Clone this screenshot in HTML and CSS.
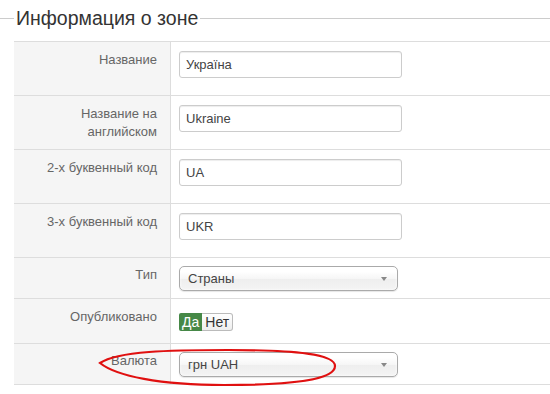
FILE: index.html
```html
<html>
  <head>
    <title>Информация о зоне</title>
    <link rel="stylesheet" href="styles.css">
  </head>

  <body>
    <fieldset class="zone">
      <legend>Информация о зоне</legend>
      <table class="admintable">
        <tr>
          <td class="key">Название</td>
          <td><input class="inputbox" type="text" value="Україна"></td>
        </tr>
        <tr>
          <td class="key">Название на<br>английском</td>
          <td><input class="inputbox" type="text" value="Ukraine"></td>
        </tr>
        <tr>
          <td class="key">2-х буквенный код</td>
          <td><input class="inputbox" type="text" value="UA"></td>
        </tr>
        <tr>
          <td class="key">3-х буквенный код</td>
          <td><input class="inputbox" type="text" value="UKR"></td>
        </tr>
        <tr class="row-sel">
          <td class="key">Тип</td>
          <td><div class="chzn"><span>Страны</span><b class="arrow"></b></div></td>
        </tr>
        <tr class="row-pub">
          <td class="key">Опубликовано</td>
          <td>
            <div class="toggle"><span class="yes">Да</span><span class="no">Нет</span></div>
          </td>
        </tr>
        <tr class="row-sel">
          <td class="key">Валюта</td>
          <td><div class="chzn"><span>грн UAH</span><b class="arrow"></b></div></td>
        </tr>
      </table>
    </fieldset>

    <svg class="scribble" width="550" height="394" viewBox="0 0 550 394">
      <path d="M100,363 C118,351 170,350 228,350 C296,350 335,354 335,366 C335,380 292,385 224,385 C160,385 116,376 100,363 Z" fill="none" stroke="#e01010" stroke-width="2.2"/>
    </svg>
  </body>
</html>
```

FILE: styles.css
```css
body {
  margin: 0;
  overflow: hidden;
  font-family: "Liberation Sans", Arial, sans-serif;
  font-size: 13px;
  color: #333;
  background: #fff;
}
.zone {
  margin: 6px 0 0 0;
  padding: 0 0 0 14px;
  border: none;
  border-top: 1px solid #ccc;
}
.zone legend {
  padding: 0 2px;
  font-size: 19.5px;
  line-height: 24px;
  color: #333;
}
.admintable {
  width: 100%;
  margin-top: 11px;
  border-collapse: collapse;
  font-size: 13px;
}
.admintable td {
  border-top: 1px solid #ddd;
  border-bottom: 1px solid #ddd;
  padding: 9px 0 8px 8px;
  vertical-align: top;
  font-size: 13px;
  line-height: 18px;
}
.admintable td.key {
  width: 143px;
  padding: 9px 13px 8px 0;
  background: #f5f5f5;
  border-right: 1px solid #ddd;
  text-align: right;
  color: #666;
}
.inputbox {
  display: block;
  box-sizing: border-box;
  width: 223px;
  height: 27px;
  margin: 0 0 9px 0;
  padding: 0 6px;
  border: 1px solid #ccc;
  border-radius: 3px;
  box-shadow: inset 0 1px 1px rgba(0, 0, 0, 0.075);
  font-family: "Liberation Sans", Arial, sans-serif;
  font-size: 13px;
  color: #444;
}
.row-sel td,
.row-sel td.key {
  padding-top: 8px;
  padding-bottom: 7px;
}
.chzn {
  position: relative;
  box-sizing: border-box;
  width: 219px;
  height: 25px;
  padding: 0 8px;
  border: 1px solid #aaa;
  border-radius: 5px;
  background: linear-gradient(#ffffff 20%, #f6f6f6 50%, #eeeeee 52%, #f4f4f4);
  box-shadow: inset 0 0 3px #fff, 0 1px 1px rgba(0, 0, 0, 0.1);
  line-height: 23px;
  color: #444;
}
.chzn .arrow {
  position: absolute;
  right: 10px;
  top: 10px;
  border-left: 3px solid transparent;
  border-right: 3px solid transparent;
  border-top: 4px solid #888;
}
.row-pub td {
  padding-top: 14px;
  padding-bottom: 12px;
}
.row-pub td.key {
  padding-top: 9px;
}
.toggle {
  display: flex;
  height: 18px;
  line-height: 18px;
  font-size: 14px;
}
.toggle .yes {
  padding: 0 3px;
  background: #468847;
  color: #fff;
  border-radius: 2px 0 0 2px;
}
.toggle .no {
  padding: 0 3px;
  border: 1px solid #bbb;
  border-left: none;
  border-radius: 0 3px 3px 0;
  background: linear-gradient(#fff, #eee);
  color: #333;
  line-height: 16px;
}
.scribble {
  position: absolute;
  left: 0;
  top: 0;
  pointer-events: none;
}
```
